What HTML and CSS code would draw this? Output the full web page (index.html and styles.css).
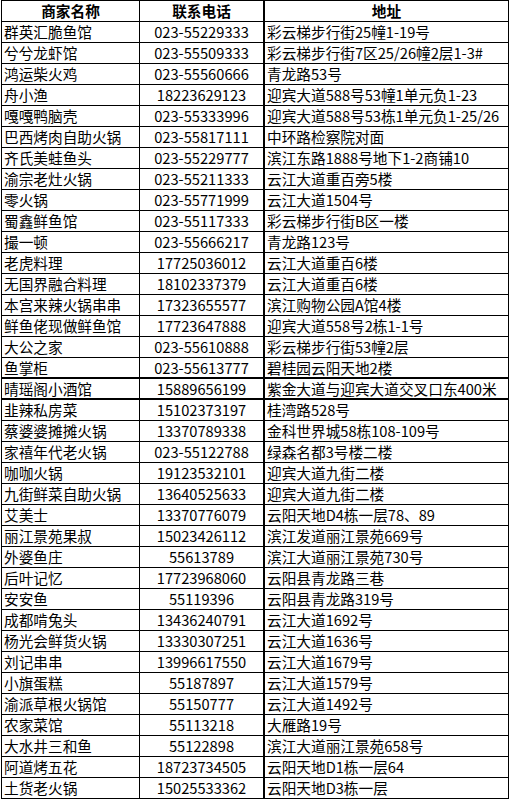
FILE: index.html
```html
<!DOCTYPE html>
<html lang="zh-CN">
<head>
<meta charset="utf-8">
<title>商家名单</title>
<link rel="stylesheet" href="styles.css">
</head>
<body>
<div class="sheet">
  <div class="c h n">商家名称</div><div class="c h p">联系电话</div><div class="c h a">地址</div>
  <div class="c n">群英汇脆鱼馆</div><div class="c p">023-55229333</div><div class="c a">彩云梯步行街25幢1-19号</div>
  <div class="c n">兮兮龙虾馆</div><div class="c p">023-55509333</div><div class="c a">彩云梯步行街7区25/26幢2层1-3#</div>
  <div class="c n">鸿运柴火鸡</div><div class="c p">023-55560666</div><div class="c a">青龙路53号</div>
  <div class="c n">舟小渔</div><div class="c p">18223629123</div><div class="c a">迎宾大道588号53幢1单元负1-23</div>
  <div class="c n">嘎嘎鸭脑壳</div><div class="c p">023-55333996</div><div class="c a">迎宾大道588号53栋1单元负1-25/26</div>
  <div class="c n">巴西烤肉自助火锅</div><div class="c p">023-55817111</div><div class="c a">中环路检察院对面</div>
  <div class="c n">齐氏美蛙鱼头</div><div class="c p">023-55229777</div><div class="c a">滨江东路1888号地下1-2商铺10</div>
  <div class="c n">渝宗老灶火锅</div><div class="c p">023-55211333</div><div class="c a">云江大道重百旁5楼</div>
  <div class="c n">零火锅</div><div class="c p">023-55771999</div><div class="c a">云江大道1504号</div>
  <div class="c n">蜀鑫鲜鱼馆</div><div class="c p">023-55117333</div><div class="c a">彩云梯步行街B区一楼</div>
  <div class="c n">撮一顿</div><div class="c p">023-55666217</div><div class="c a">青龙路123号</div>
  <div class="c n">老虎料理</div><div class="c p">17725036012</div><div class="c a">云江大道重百6楼</div>
  <div class="c n">无国界融合料理</div><div class="c p">18102337379</div><div class="c a">云江大道重百6楼</div>
  <div class="c n">本宫来辣火锅串串</div><div class="c p">17323655577</div><div class="c a">滨江购物公园A馆4楼</div>
  <div class="c n">鲜鱼佬现做鲜鱼馆</div><div class="c p">17723647888</div><div class="c a">迎宾大道558号2栋1-1号</div>
  <div class="c n">大公之家</div><div class="c p">023-55610888</div><div class="c a">彩云梯步行街53幢2层</div>
  <div class="c n tk">鱼掌柜</div><div class="c p tk">023-55613777</div><div class="c a tk">碧桂园云阳天地2楼</div>
  <div class="c n tk">晴瑶阁小酒馆</div><div class="c p tk">15889656199</div><div class="c a tk">紫金大道与迎宾大道交叉口东400米</div>
  <div class="c n">韭辣私房菜</div><div class="c p">15102373197</div><div class="c a">桂湾路528号</div>
  <div class="c n">蔡婆婆摊摊火锅</div><div class="c p">13370789338</div><div class="c a">金科世界城58栋108-109号</div>
  <div class="c n">家禧年代老火锅</div><div class="c p">023-55122788</div><div class="c a">绿森名都3号楼二楼</div>
  <div class="c n">咖咖火锅</div><div class="c p">19123532101</div><div class="c a">迎宾大道九街二楼</div>
  <div class="c n">九街鲜菜自助火锅</div><div class="c p">13640525633</div><div class="c a">迎宾大道九街二楼</div>
  <div class="c n">艾美士</div><div class="c p">13370776079</div><div class="c a">云阳天地D4栋一层78、89</div>
  <div class="c n">丽江景苑果叔</div><div class="c p">15023426112</div><div class="c a">滨江发道丽江景苑669号</div>
  <div class="c n">外婆鱼庄</div><div class="c p">55613789</div><div class="c a">滨江大道丽江景苑730号</div>
  <div class="c n">后叶记忆</div><div class="c p">17723968060</div><div class="c a">云阳县青龙路三巷</div>
  <div class="c n">安安鱼</div><div class="c p">55119396</div><div class="c a">云阳县青龙路319号</div>
  <div class="c n">成都啃兔头</div><div class="c p">13436240791</div><div class="c a">云江大道1692号</div>
  <div class="c n">杨光会鲜货火锅</div><div class="c p">13330307251</div><div class="c a">云江大道1636号</div>
  <div class="c n">刘记串串</div><div class="c p">13996617550</div><div class="c a">云江大道1679号</div>
  <div class="c n">小旗蛋糕</div><div class="c p">55187897</div><div class="c a">云江大道1579号</div>
  <div class="c n">渝派草根火锅馆</div><div class="c p">55150777</div><div class="c a">云江大道1492号</div>
  <div class="c n">农家菜馆</div><div class="c p">55113218</div><div class="c a">大雁路19号</div>
  <div class="c n">大水井三和鱼</div><div class="c p">55122898</div><div class="c a">滨江大道丽江景苑658号</div>
  <div class="c n">阿道烤五花</div><div class="c p">18723734505</div><div class="c a">云阳天地D1栋一层64</div>
  <div class="c n">土货老火锅</div><div class="c p">15025533362</div><div class="c a">云阳天地D3栋一层</div>
</div>
</body>
</html>
```

FILE: styles.css
```css
html, body {
  margin: 0;
  padding: 0;
  background: #ffffff;
}

body {
  font-family: "Noto Sans CJK SC", "Noto Sans", sans-serif;
  font-size: 14.67px;
  color: #000000;
}

.sheet {
  display: grid;
  grid-template-columns: 138px 125px 244px;
  grid-auto-rows: 21px;
  width: 507px;
  margin-left: 1px;
  border-top: 1px solid #000;
  border-left: 1px solid #000;
}

.c {
  box-sizing: border-box;
  border-right: 1px solid #000;
  border-bottom: 1px solid #000;
  line-height: 20px;
  white-space: nowrap;
  overflow: hidden;
}

.n {
  padding-left: 2px;
}

.p {
  text-align: center;
  border-right-width: 2px;
}

.a {
  padding-left: 2px;
}

.h {
  font-weight: 700;
  text-align: center;
  padding-left: 0;
}

.tk {
  border-bottom-width: 2px;
  line-height: 19px;
}
```
